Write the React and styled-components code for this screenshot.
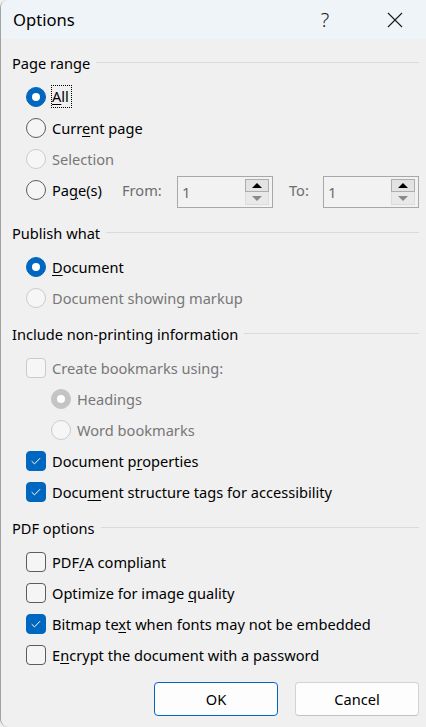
import React from 'react'
import styled, { createGlobalStyle } from 'styled-components'

const GlobalStyle = createGlobalStyle`
    html, body {
        margin: 0;
        padding: 0;
        background: #f0f0f0;
    }
    body {
        font-family: "Noto Sans", "Open Sans", sans-serif;
        font-size: 14.6px;
        color: #000;
    }
`;

const Dialog = styled.div`
    width: 426px;
    height: 727px;
    box-sizing: border-box;
    background: #f0f0f0;
    border-left: 1px solid #a2a2a2;
    border-radius: 8px 0 0 8px;
    overflow: hidden;
    display: flex;
    flex-direction: column;
`;

const TitleBar = styled.div`
    height: 39px;
    flex-shrink: 0;
    display: flex;
    align-items: center;
    padding-left: 12px;
    padding-right: 8px;
    background: #eff4f9;
`;

const Title = styled.div`
    font-size: 16.6px;
    flex: 1;
`;

const TitleButton = styled.div`
    width: ${p => p.$width}px;
    margin-right: ${p => p.$after || 0}px;
    height: 39px;
    display: flex;
    align-items: center;
    justify-content: center;
    font-size: 20px;
    font-weight: 300;
    color: #1a1a1a;
`;

const Body = styled.div`
    padding: 0 7px 0 11px;
    display: flex;
    flex-direction: column;
`;

const Section = styled.div`
    padding-top: ${p => p.$gap}px;
`;

const GroupHeading = styled.div`
    height: 22px;
    margin-bottom: 7px;
    display: flex;
    align-items: center;

    span {
        flex: 1;
        height: 1px;
        margin-left: 6px;
        margin-top: -2px;
        background: #dadada;
    }
`;

const OptionRow = styled.div`
    height: ${p => p.$height || 31}px;
    display: flex;
    align-items: center;
    padding-left: ${p => p.$indent}px;
    margin-bottom: ${p => p.$after || 0}px;
`;

const RadioMark = styled.div`
    width: 20px;
    height: 20px;
    box-sizing: border-box;
    border-radius: 50%;
    flex-shrink: 0;
    display: flex;
    align-items: center;
    justify-content: center;
    border: 1px solid ${p => p.$checked ? (p.$disabled ? '#c4c4c4' : '#0067c0') : (p.$disabled ? '#cbcbcb' : '#5c5c5c')};
    background: ${p => p.$checked ? (p.$disabled ? '#c4c4c4' : '#0067c0') : (p.$disabled ? '#f6f6f6' : '#f5f5f5')};

    &::after {
        content: '';
        display: ${p => p.$checked ? 'block' : 'none'};
        width: 8px;
        height: 8px;
        border-radius: 50%;
        background: #fff;
    }
`;

const CheckMark = styled.div`
    width: 20px;
    height: 20px;
    box-sizing: border-box;
    border-radius: 4px;
    flex-shrink: 0;
    display: flex;
    align-items: center;
    justify-content: center;
    border: 1px solid ${p => p.$checked ? '#0067c0' : (p.$disabled ? '#cbcbcb' : '#5c5c5c')};
    background: ${p => p.$checked ? '#0067c0' : (p.$disabled ? '#f6f6f6' : '#f5f5f5')};
`;

const Label = styled.div`
    margin-left: 6px;
    color: ${p => p.$disabled ? '#777777' : '#000'};
    white-space: nowrap;
    width: ${p => p.$width ? p.$width + 'px' : 'auto'};
    flex-shrink: 0;

    u {
        text-decoration: underline;
        text-underline-offset: 2px;
        text-decoration-thickness: 1px;
    }
`;

const Focused = styled.span`
    display: inline-block;
    outline: 1px dotted #000;
    outline-offset: 0;
    padding: 1px 2px 2px 0;
    line-height: 18px;
`;

const FieldLabel = styled.div`
    width: ${p => p.$width}px;
    margin-left: ${p => p.$offset || 0}px;
    color: #6d6d6d;
    flex-shrink: 0;
`;

const SpinBox = styled.div`
    width: 96px;
    height: 32px;
    box-sizing: border-box;
    border: 1px solid #a8a8a8;
    background: #f2f2f2;
    display: flex;
    align-items: center;
    justify-content: space-between;
    padding: 0 3px 0 4px;
    margin-top: 5px;
    flex-shrink: 0;
`;

const SpinValue = styled.div`
    color: #6d6d6d;
    font-size: 15px;
`;

const SpinButtons = styled.div`
    display: flex;
    flex-direction: column;
    width: 24px;
`;

const SpinButton = styled.div`
    height: 13px;
    box-sizing: border-box;
    display: flex;
    align-items: center;
    justify-content: center;
    border: 1px solid ${p => p.$dim ? '#dcdcdc' : '#adadad'};
    border-top-width: ${p => p.$dim ? 0 : 1}px;
    background: ${p => p.$dim ? '#e9e9e9' : '#e3e3e3'};
`;

const Arrow = styled.div`
    width: 0;
    height: 0;
    border-left: 5px solid transparent;
    border-right: 5px solid transparent;
    ${p => p.$down
        ? `border-top: 5px solid #8a8a8a;`
        : `border-bottom: 5px solid #000;`}
`;

const Footer = styled.div`
    display: flex;
    justify-content: flex-end;
    gap: 17px;
    margin-top: 12px;
`;

const Button = styled.div`
    width: 124px;
    height: 34px;
    box-sizing: border-box;
    display: flex;
    align-items: center;
    justify-content: center;
    border-radius: 4px;
    background: #fdfdfd;
    border: 1px solid ${p => p.$primary ? '#0067c0' : '#d3d3d3'};
    border-bottom-color: ${p => p.$primary ? '#0067c0' : '#c2c2c2'};
    font-size: 14.6px;
`;

const Tick = () => (
    <svg width="20" height="20" viewBox="0 0 20 20">
        <path d="M5.2 10.2 L8.3 13.2 L14.6 6.8" fill="none" stroke="#fff" strokeWidth="1.1" />
    </svg>
);

const Radio = ({ checked, disabled, indent = 14, children }) => (
    <OptionRow $indent={indent}>
        <RadioMark $checked={checked} $disabled={disabled} />
        <Label $disabled={disabled}>{children}</Label>
    </OptionRow>
);

const Check = ({ checked, disabled, children }) => (
    <OptionRow $indent={14}>
        <CheckMark $checked={checked} $disabled={disabled}>
            {checked && <Tick />}
        </CheckMark>
        <Label $disabled={disabled}>{children}</Label>
    </OptionRow>
);

const Heading = ({ children }) => (
    <GroupHeading>
        {children}
        <span></span>
    </GroupHeading>
);

const Spinner = () => (
    <SpinBox>
        <SpinValue>1</SpinValue>
        <SpinButtons>
            <SpinButton><Arrow /></SpinButton>
            <SpinButton $dim><Arrow $down /></SpinButton>
        </SpinButtons>
    </SpinBox>
);

const App = () => {
    return (
        <>
        <GlobalStyle />
        <Dialog>
            <TitleBar>
                <Title>Options</Title>
                <TitleButton $width={26} $after={34}>?</TitleButton>
                <TitleButton $width={46}>
                    <svg width="16" height="16" viewBox="0 0 16 16">
                        <path d="M1 1 L15 15 M15 1 L1 15" stroke="#1a1a1a" strokeWidth="1.1" fill="none" />
                    </svg>
                </TitleButton>
            </TitleBar>
            <Body>
                <Section $gap={13}>
                    <Heading>Page range</Heading>
                    <Radio checked><Focused><u>A</u>ll</Focused></Radio>
                    <Radio>Curr<u>e</u>nt page</Radio>
                    <Radio disabled>Selection</Radio>
                    <OptionRow $indent={14} $after={6}>
                        <RadioMark />
                        <Label $width={70}>Pa<u>g</u>e(s)</Label>
                        <FieldLabel $width={55}>From:</FieldLabel>
                        <Spinner />
                        <FieldLabel $width={34} $offset={16}>To:</FieldLabel>
                        <Spinner />
                    </OptionRow>
                </Section>
                <Section $gap={11}>
                    <Heading>Publish what</Heading>
                    <Radio checked><u>D</u>ocument</Radio>
                    <Radio disabled>Document showing markup</Radio>
                </Section>
                <Section $gap={10}>
                    <Heading>Include non-printing information</Heading>
                    <Check disabled>Create bookmarks using:</Check>
                    <Radio checked disabled indent={39}>Headings</Radio>
                    <Radio disabled indent={39}>Word bookmarks</Radio>
                    <Check checked>Document p<u>r</u>operties</Check>
                    <Check checked>Docu<u>m</u>ent structure tags for accessibility</Check>
                </Section>
                <Section $gap={10}>
                    <Heading>PDF options</Heading>
                    <Check>PDF<u>/</u>A compliant</Check>
                    <Check>Optimize for image <u>q</u>uality</Check>
                    <Check checked>Bitmap te<u>x</u>t when fonts may not be embedded</Check>
                    <Check>E<u>n</u>crypt the document with a password</Check>
                </Section>
                <Footer>
                    <Button $primary>OK</Button>
                    <Button>Cancel</Button>
                </Footer>
            </Body>
        </Dialog>
        </>
    )
}

export default App;
